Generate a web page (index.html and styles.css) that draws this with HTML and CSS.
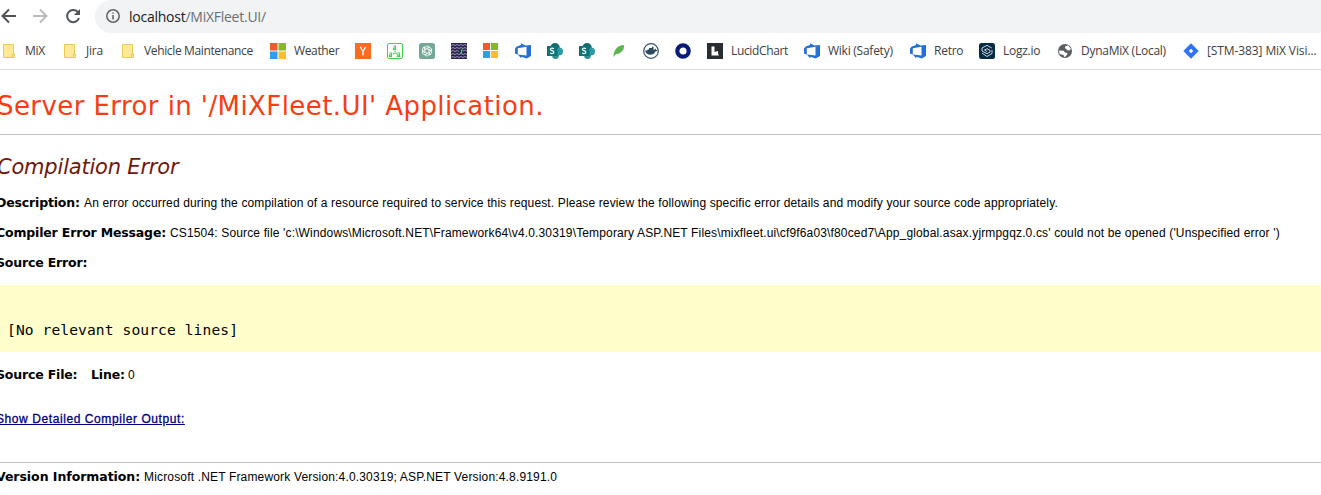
FILE: index.html
```html
<!DOCTYPE html>
<html lang="en">
<head>
<meta charset="utf-8">
<title>Compilation Error</title>
<link rel="stylesheet" href="styles.css">
</head>
<body>
<svg class="defs" width="0" height="0" aria-hidden="true">
  <symbol id="folder" viewBox="0 0 16 16"><path d="M2.500 1.500h10v9.500h1v3.500h-11z" fill="#ffe898" stroke="#e9cb57"/><path d="M11.500 14v-3h2" fill="none" stroke="#e9cb57"/></symbol>
  <symbol id="windows" viewBox="0 0 16 16"><path d="M0 0h7.500v7.500H0z" fill="#f1592a"/><path d="M8.500 0H16v7.500H8.500z" fill="#80ba27"/><path d="M0 8.500h7.500V16H0z" fill="#2f9df1"/><path d="M8.500 8.500H16V16H8.500z" fill="#ffbd2e"/></symbol>
  <symbol id="devops" viewBox="0 0 16 16"><path fill-rule="evenodd" d="M0 5.500 1.800 3.500 6 2V.2L10.500 2.600 16 2v11l-4.300 2.600-5.400-1.800v1.700L3 11.700 0 10.600zM2.800 5.200v6.300l8.700 1V3.700z" fill="#2470d4"/></symbol>
  <symbol id="sharepoint" viewBox="0 0 16 16"><circle cx="8" cy="4.800" r="4.800" fill="#14696d"/><circle cx="12" cy="8.500" r="4" fill="#2c9ba1"/><circle cx="8.500" cy="12.700" r="3.300" fill="#2c9297"/><path d="M0 3h10.500v10H0z" fill="#0d7377"/><path d="M6.900 5.700C5.200 4.700 3.200 5.200 3.400 6.500c.2 1.500 3.500.9 3.500 2.700 0 1.500-2.300 1.700-3.700.8" fill="none" stroke="#fff" stroke-width="1.200"/></symbol>
</svg>

<header class="browser">
  <div class="toolbar">
    <svg class="nav back" viewBox="0 0 16 16"><path d="M16 8H3M9 1.500 2.500 8 9 14.500"/></svg>
    <svg class="nav forward" viewBox="0 0 16 16"><path d="M0 8h13M7 1.500 13.500 8 7 14.500"/></svg>
    <svg class="nav reload" viewBox="0 0 16 16"><path d="M13.200 4.500A6.100 6.100 0 1 0 14 10"/><path class="tip" d="M15 1v6H9z"/></svg>
    <div class="address">
      <svg class="info" viewBox="0 0 14 14"><circle cx="7" cy="7" r="6.200"/><path d="M7 6v4.500M7 3.400v1.400"/></svg>
      <span class="url">localhost<span class="path">/MiXFleet.UI/</span></span>
    </div>
  </div>
  <nav class="bookmarks">
    <a class="mark mix"><svg><use href="#folder"/></svg><span>MiX</span></a>
    <a class="mark jira"><svg><use href="#folder"/></svg><span>Jira</span></a>
    <a class="mark vehicle"><svg><use href="#folder"/></svg><span>Vehicle Maintenance</span></a>
    <a class="mark weather"><svg><use href="#windows"/></svg><span>Weather</span></a>
    <a class="mark"><svg viewBox="0 0 16 16"><path fill="#fb6c20" d="M0 0h16v16H0z"/><path d="m5.300 3.800 2.700 4.700 2.700-4.700M8 8.500v4" fill="none" stroke="#fff" stroke-width="1.300"/></svg></a>
    <a class="mark"><svg viewBox="0 0 16 16" fill="none" stroke="#41d150"><rect x=".5" y=".5" width="15" height="15" rx="1.500"/><path d="M6.500 3h2v3.500h-2V5h2M2.500 10h2v3.500h-2V12h2M10.500 10h2v3.500h-2V12h2M8 7.500v2M7.500 10 6 11M8.500 10l1.500 1" stroke-width="1.200"/></svg></a>
    <a class="mark"><svg viewBox="0 0 16 16" fill="none"><rect width="16" height="16" rx="2.500" fill="#74a798"/><g stroke="#f3faf7" stroke-width=".9"><path id="petal" d="M6 8.800V5.300A2.400 2.400 0 0 1 10.300 4L7.600 5.600"/><use href="#petal" transform="rotate(60 8 8)"/><use href="#petal" transform="rotate(120 8 8)"/><use href="#petal" transform="rotate(180 8 8)"/><use href="#petal" transform="rotate(240 8 8)"/><use href="#petal" transform="rotate(300 8 8)"/></g></svg></a>
    <a class="mark"><svg viewBox="0 0 16 16" fill="none"><path fill="#29234e" d="M0 0h16v16H0z"/><path d="M0 2.500l2-1 2 1 2-1 2 1 2-1 2 1 2-1 2 1M0 5.500l2-1 2 1 2-1 2 1 2-1 2 1 2-1 2 1M0 8.500l2-1 2 1 2-1 2 1M12 8l2-1 2 1M0 11.500l2-1 2 1 2-1 2 1 2-1 2 1 2-1 2 1M0 14.500l2-1 2 1 2-1 2 1 2-1 2 1 2-1 2 1" stroke="#9a95b4"/><path d="M12 7h-1.500v3H9" stroke="#45d554" stroke-width="1.200"/></svg></a>
    <a class="mark"><svg class="small"><use href="#windows"/></svg></a>
    <a class="mark"><svg><use href="#devops"/></svg></a>
    <a class="mark"><svg><use href="#sharepoint"/></svg></a>
    <a class="mark"><svg><use href="#sharepoint"/></svg></a>
    <a class="mark"><svg viewBox="0 0 16 16"><path d="M2.500 14C2.500 7 6.500 2 12.800 2c1 4.500-2.300 8.500-8.300 9.500z" fill="#5ab552"/></svg></a>
    <a class="mark"><svg viewBox="0 0 16 16"><circle cx="8" cy="8" r="7.300" fill="#fff" stroke="#34536a" stroke-width="1.200"/><path d="M2 7.500h2.500v-1h1.500V5h3V3.800h1.500v3h1l.8-1.300 1 1.500 1.200.2c-.7 1.200-1.600 1.300-2.200 1.300C10.500 13 3.500 13 2 7.500z" fill="#294960"/></svg></a>
    <a class="mark"><svg viewBox="0 0 16 16"><circle cx="8" cy="8" r="5.700" fill="#fff" stroke="#071c77" stroke-width="4.200"/></svg></a>
    <a class="mark lucid"><svg viewBox="0 0 16 16"><path fill="#282c33" d="M0 0h16v16H0z"/><path d="M4.500 3.500h3V9L11 8v2l.8 2.500H4.500z" fill="#fff"/></svg><span>LucidChart</span></a>
    <a class="mark wiki"><svg><use href="#devops"/></svg><span>Wiki (Safety)</span></a>
    <a class="mark retro"><svg><use href="#devops"/></svg><span>Retro</span></a>
    <a class="mark logz"><svg viewBox="0 0 16 16"><rect width="16" height="16" rx="2.500" fill="#062b43"/><g fill="none" stroke="#dce8ed" stroke-width=".9"><path d="M12.700 5 8 2.300 3 5v3l5 2.700L11 9V7.300L8 5.700 5.500 7 8 8.500"/><path d="m3 10 5 3.500 5-3V7"/></g></svg><span>Logz.io</span></a>
    <a class="mark dyna"><svg viewBox="0 0 16 16"><circle cx="8" cy="8" r="7" fill="#5a5d61"/><path d="M8 3.500 11 2.200l3 3.600-1.500 1.700-2.500-.2L9.500 6 8 5.200zM2 7.500l4.500.2L8 9.500l2.500.5-.5 2-2.500 2.200-1-2.200L2.500 11z" fill="#fff"/></svg><span>DynaMiX (Local)</span></a>
    <a class="mark stm"><svg viewBox="0 0 16 16"><path d="m8 .3 7.700 7.700L8 15.700.3 8z" fill="#2f73f5"/><path d="m8 5.800 2.200 2.200L8 10.200 5.800 8z" fill="#fff"/></svg><span>[STM-383] MiX Visi...</span></a>
  </nav>
</header>

<main class="page">
  <h1><span>Server Error in '/MiXFleet.UI' Application.</span></h1>
  <h2><span>Compilation Error</span></h2>
  <p class="row"><b class="b-desc">Description:</b><span class="t-desc">An error occurred during the compilation of a resource required to service this request. Please review the following specific error details and modify your source code appropriately.</span></p>
  <p class="row"><b class="b-comp">Compiler Error Message:</b><span class="t-comp">CS1504: Source file 'c:\Windows\Microsoft.NET\Framework64\v4.0.30319\Temporary ASP.NET Files\mixfleet.ui\cf9f6a03\f80ced7\App_global.asax.yjrmpgqz.0.cs' could not be opened ('Unspecified error ')</span></p>
  <p class="row"><b class="b-src">Source Error:</b></p>
  <pre class="source">[No relevant source lines]</pre>
  <p class="row file"><b class="b-file">Source File:</b><b class="b-line">Line:</b><span>0</span></p>
  <p class="row output"><a>Show Detailed Compiler Output:</a></p>
  <p class="row version"><b class="b-ver">Version Information:</b><span class="t-ver">Microsoft .NET Framework Version:4.0.30319; ASP.NET Version:4.8.9191.0</span></p>
</main>
</body>
</html>
```

FILE: styles.css
```css
* { box-sizing: border-box; }
body { margin: 0; background: #fff; color: #000; overflow: hidden; font: 12px "Liberation Sans", Arial, sans-serif; }
.defs { display: block; height: 0; }

/* Browser chrome */
.browser { height: 70px; border-bottom: 1px solid #d9dbde; font-family: "Open Sans", "Noto Sans", sans-serif; }
.toolbar { display: flex; align-items: center; height: 33px; }
.nav { flex: none; width: 16px; height: 16px; margin-bottom: 1px; fill: none; stroke: #50545a; stroke-width: 2; }
.forward { margin-left: 17px; stroke: #babcbe; }
.reload { margin-left: 16px; }
.reload .tip { fill: #50545a; stroke: none; }
.address { flex: 1; display: flex; align-items: center; height: 33px; margin-left: 14px; padding-left: 11px; background: #f1f3f4; border-radius: 17px 0 0 17px; }
.info { width: 14px; height: 14px; margin: 0 9px 1px 0; fill: none; stroke: #5f6368; stroke-width: 1.500; }
.url { font-size: 14px; line-height: 20px; letter-spacing: -0.25px; color: #202124; white-space: nowrap; }
.path { color: #6b6f74; }
.bookmarks { display: flex; align-items: center; gap: 16px; height: 36px; padding-left: 1px; }
.mark { flex: none; display: flex; align-items: center; gap: 8px; color: #3c4043; line-height: 16px; }
.mark svg { flex: none; display: block; width: 16px; height: 16px; }
.mark svg.small { padding: 0 1px 1px 0; }
.mark span { white-space: nowrap; letter-spacing: -0.25px; }
.mix span { width: 21px; }
.jira span { width: 18px; }
.vehicle span { width: 110px; letter-spacing: -0.36px; }
.weather span { width: 45px; letter-spacing: -0.35px; }
.lucid span { width: 57px; letter-spacing: -0.35px; }
.wiki span { width: 66px; }
.retro span { width: 29px; }
.logz span { width: 38px; }
.dyna span { width: 86px; }
.stm span { width: 112px; letter-spacing: -0.1px; }

/* Error report */
h1, h2, .row b { font-family: Verdana, "DejaVu Sans", sans-serif; }
h1 { margin: 0; height: 65px; padding-top: 20px; border-bottom: 1px solid #c0c0c0; color: #f83c14; font-size: 26px; font-weight: 400; line-height: 32px; letter-spacing: 0.42px; white-space: nowrap; }
h1 span { margin-left: -3px; }
h2 { margin: 19px 0 0; color: #70170a; font-size: 21px; font-style: italic; font-weight: 400; line-height: 27px; letter-spacing: -0.2px; }
h2 span { margin-left: -3px; }
.row { display: flex; align-items: baseline; height: 16px; margin: 14px 0 0 -4px; line-height: 16px; white-space: nowrap; }
h2 + .row { margin-top: 14px; }
.row b { flex: none; font-size: 12.500px; letter-spacing: -0.17px; }
.b-desc { width: 88px; }
.b-comp { width: 174px; }
.b-file { width: 95px; }
.b-line { width: 37px; }
.row .b-ver { width: 148px; letter-spacing: -0.05px; }
.t-desc { letter-spacing: 0.137px; }
.t-comp { letter-spacing: 0.15px; }
.t-ver { letter-spacing: 0.165px; }
.source { height: 67px; margin: 14px 0 0; padding: 36px 0 0 7px; background: #ffffcc; font: 14.600px/18px "DejaVu Sans Mono", monospace; letter-spacing: 0.1px; }
.file { margin-top: 15px; }
.output { margin-top: 28px; }
.output a { color: #000080; text-decoration: underline; letter-spacing: 0.58px; -webkit-text-stroke: 0.3px #000080; }
.version { height: 30px; margin-top: 35px; padding-top: 6px; border-top: 1px solid #c0c0c0; }
```
